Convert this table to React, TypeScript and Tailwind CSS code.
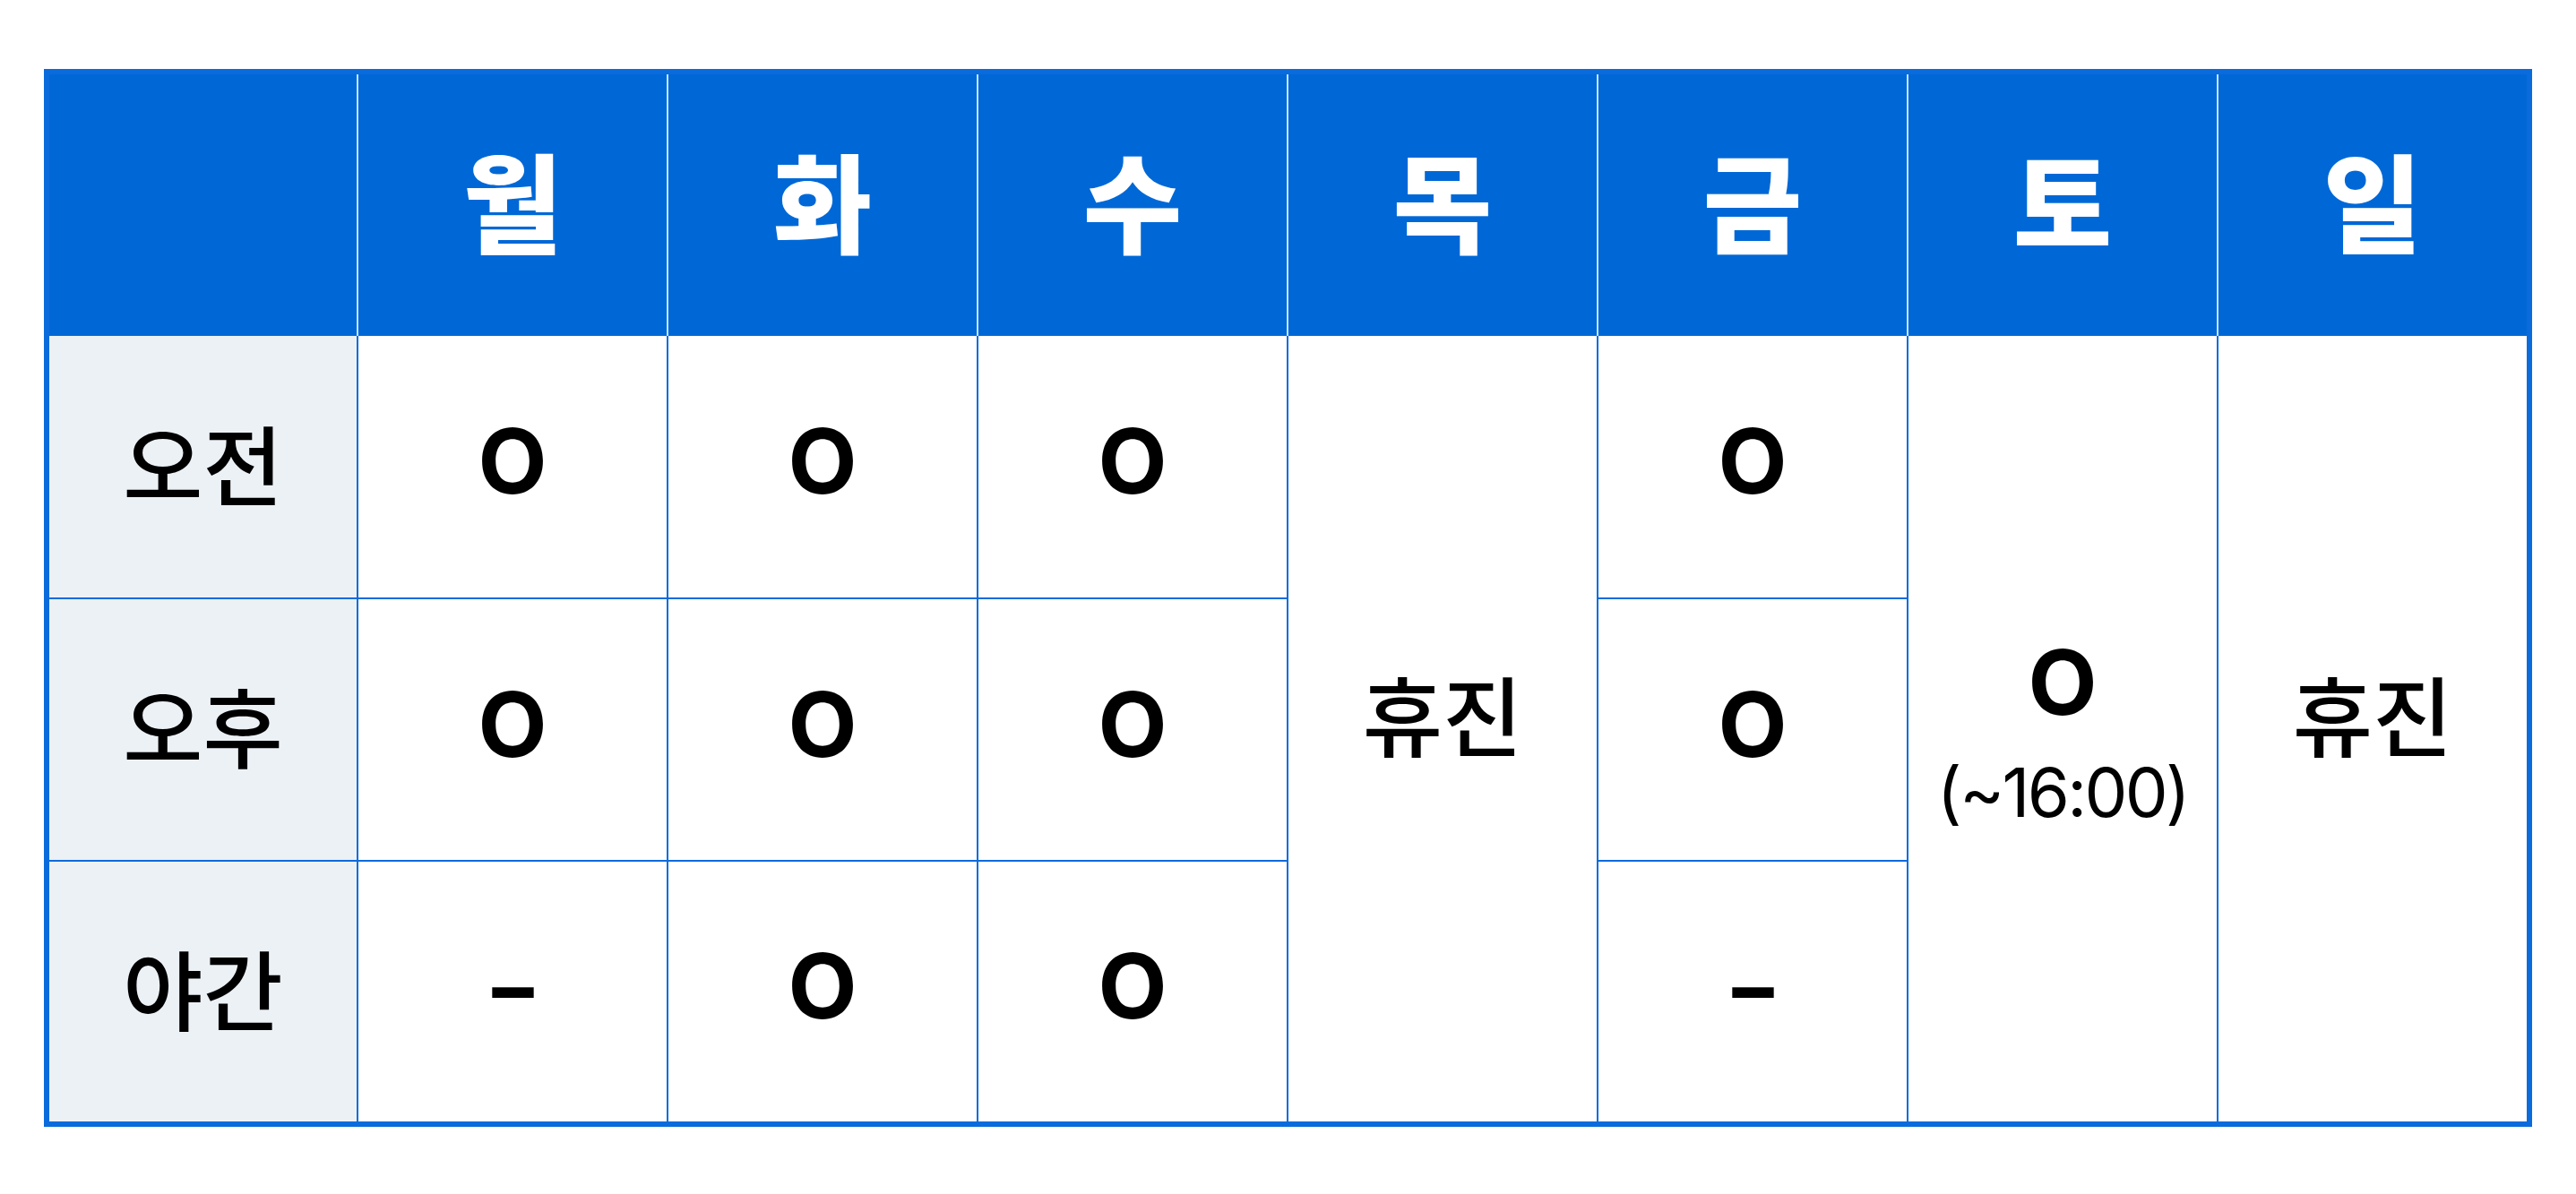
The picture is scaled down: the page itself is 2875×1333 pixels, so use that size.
import React from 'react';

const days = ['월', '화', '수', '목', '금', '토', '일'];

const kr = "font-['Noto_Sans_CJK_KR',sans-serif]";
const mark = "font-['Inter',sans-serif]";

function Cell({ children, top = true, label = false, span = false }: { children?: React.ReactNode; top?: boolean; label?: boolean; span?: boolean }) {
    return (
        <div
            className={`flex items-center justify-center border-[#0a6bdc] ${top ? 'border-t-2' : ''} ${label ? 'bg-[#ecf1f6]' : 'border-l-2 bg-white'} ${span ? 'row-span-3' : ''}`}
        >
            {children}
        </div>
    );
}

const O = () => <span className={`${mark} mb-[12px] text-[100px] font-bold leading-none text-black`}>O</span>;
const Dash = () => <span className={`${mark} mb-[10px] scale-x-[1.4] text-[100px] font-bold leading-none text-black`}>-</span>;
const Label = ({ text, lift = 'mb-[14px]' }: { text: string; lift?: string }) => (
    <span className={`${kr} ${lift} text-[97px] font-medium leading-none text-black`}>{text}</span>
);

export default function App() {
    return (
        <div className="min-h-screen bg-white pl-[49px] pt-[77px]">
            <div className="grid h-[1181px] w-[2777px] grid-cols-[343px_repeat(7,1fr)] grid-rows-[292px_292px_293px_1fr] border-[6px] border-[#0a6bdc] bg-white">
                {/* header */}
                <div className="bg-[#0068d6]" />
                {days.map(d => (
                    <div
                        key={d}
                        className={`${kr} flex items-center justify-center border-l-2 border-white/80 bg-[#0068d6] pb-[14px] text-[120px] font-black leading-none text-white`}
                    >
                        {d}
                    </div>
                ))}

                {/* 오전 */}
                <Cell top={false} label><Label text="오전" /></Cell>
                <Cell top={false}><O /></Cell>
                <Cell top={false}><O /></Cell>
                <Cell top={false}><O /></Cell>
                <Cell top={false} span><Label text="휴진" lift="mb-[38px]" /></Cell>
                <Cell top={false}><O /></Cell>
                <Cell top={false} span>
                    <div className="flex flex-col items-center pt-[6px]">
                        <span className={`${mark} text-[100px] font-bold leading-none text-black`}>O</span>
                        <span className={`${mark} mt-[34px] text-[76px] font-normal leading-none tracking-[-0.035em] text-black`}>(~16:00)</span>
                    </div>
                </Cell>
                <Cell top={false} span><Label text="휴진" lift="mb-[38px]" /></Cell>

                {/* 오후 */}
                <Cell label><Label text="오후" /></Cell>
                <Cell><O /></Cell>
                <Cell><O /></Cell>
                <Cell><O /></Cell>
                <Cell><O /></Cell>

                {/* 야간 */}
                <Cell label><Label text="야간" /></Cell>
                <Cell><Dash /></Cell>
                <Cell><O /></Cell>
                <Cell><O /></Cell>
                <Cell><Dash /></Cell>
            </div>
        </div>
    );
}
